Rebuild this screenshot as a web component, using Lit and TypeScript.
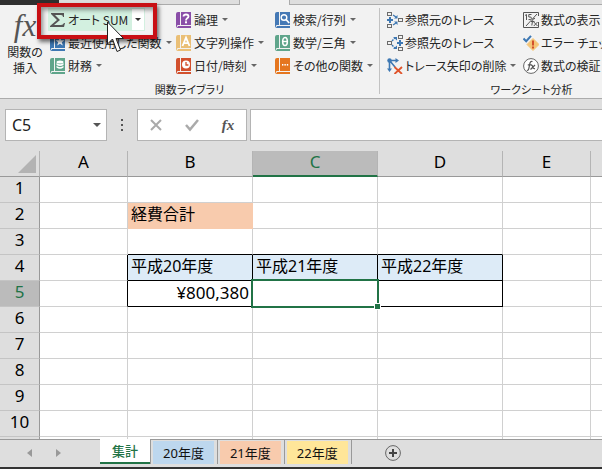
import { LitElement, html, svg, css, nothing, TemplateResult } from "lit";
import { customElement, property, state } from "lit/decorators.js";
import { classMap } from "lit/directives/class-map.js";

const book = (color: string, mark: TemplateResult) => svg`
  <path d="M2 0H4V13H2Q1 13 1 14Q1 15 2 15H15V16H2Q0 16 0 14V2Q0 0 2 0Z" fill=${color} />
  <rect x="5" y="0" width="10" height="13" fill=${color} />
  <rect x="2" y="14" width="13" height="1" fill=${color} />
  ${mark}`;

const icons: Record<string, TemplateResult> = {
  sum: svg`<path d="M1 1H14V5H13Q13 3 11 3H5L10 8L4 13H11Q13 13 14 11H15L14 15H0V14L7 8L1 2Z" fill="#555"/>`,
  recent: book("#3e78b3", svg`<path d="M10 2L11.2 5.2H14.4L11.8 7.3L12.8 10.6L10 8.7L7.2 10.6L8.2 7.3L5.6 5.2H8.8Z" fill="#fff"/>`),
  finance: book("#5fa58b", svg`<g fill="#fff"><ellipse cx="10" cy="4" rx="3.5" ry="1.6"/><path d="M6.5 5Q10 7.5 13.5 5V7Q10 9 6.5 7ZM6.5 8Q10 10.3 13.5 8V9.5Q10 12 6.5 9.5Z"/></g>`),
  logic: book("#8a4ea8", svg`<path d="M7.5 4.5Q7.5 2.5 10 2.5Q12.5 2.5 12.5 4.5Q12.5 5.6 11 6.4Q10 7 10 8.4" fill="none" stroke="#fff" stroke-width="1.8"/><rect x="9" y="9.3" width="2" height="2" fill="#fff"/>`),
  text: book("#eabf76", svg`<path d="M6.5 11L10 2.6L13.5 11M7.8 8.2H12.2" fill="none" stroke="#fff" stroke-width="1.8"/>`),
  date: book("#d2502d", svg`<circle cx="10" cy="6.5" r="4" fill="#fff"/><path d="M10 4V7H12.4" fill="none" stroke="#d2502d" stroke-width="1.3"/>`),
  lookup: book("#4579b5", svg`<circle cx="9" cy="5.5" r="2.8" fill="none" stroke="#fff" stroke-width="1.4"/><path d="M11 7.5L14.2 11" stroke="#fff" stroke-width="1.8"/>`),
  math: book("#5fa58b", svg`<ellipse cx="10" cy="6.5" rx="2.3" ry="4" fill="none" stroke="#fff" stroke-width="1.6"/><path d="M8 6.5H12" stroke="#fff" stroke-width="1.3"/>`),
  more: book("#e5761f", svg`<g fill="#fff"><rect x="7" y="6" width="1.4" height="1.6"/><rect x="9.4" y="6" width="1.4" height="1.6"/><rect x="11.8" y="6" width="1.4" height="1.6"/></g>`),
  precedents: svg`<g fill="none" stroke="#6b6b6b"><rect x=".5" y=".5" width="4" height="3"/><rect x=".5" y="12.5" width="4" height="3"/><rect x="11.5" y="6.5" width="4" height="3"/></g>
    <path d="M0 8H6M3 5V11" stroke="#3e78b3" stroke-width="2"/><path d="M6 3L9 5M6 13L9 11" stroke="#3e78b3" stroke-width="1.4"/><path d="M10.500 3V6.500H7ZM10.500 13V9.500H7Z" fill="#3e78b3"/>`,
  dependents: svg`<g fill="none" stroke="#6b6b6b"><rect x="11.5" y=".5" width="4" height="3"/><rect x="11.5" y="12.5" width="4" height="3"/><rect x=".5" y="6.500" width="4" height="3"/></g>
    <path d="M10 8H16M13 5V11" stroke="#3e78b3" stroke-width="2"/><path d="M5 6L8 3M5 10L8 13" stroke="#3e78b3" stroke-width="1.4" stroke-dasharray="2 1"/><path d="M6 2H10V5.500ZM6 14H10V10.500Z" fill="#3e78b3"/>`,
  erase: svg`<path d="M2.500 2V11M2 2.500H9M3 3L8 9" stroke="#3e78b3" stroke-width="1.600" fill="none"/><circle cx="2.500" cy="2.500" r="2.200" fill="#3e78b3"/>
    <path d="M8.500 0L12 2.500L8.500 5ZM0 10.500H5L2.500 14Z" fill="#3e78b3"/><path d="M7.500 9L15 16M15 9L7.500 16" stroke="#e0542b" stroke-width="1.800"/>`,
  show: svg`<path d="M15.500 10V15.500H.5V.5H15.500V4" fill="none" stroke="#555"/><path d="M2 3.500L3.500 2.500V8M8.500 2.500H5.800V5Q8.600 4.500 8.500 6.300Q8.300 8 5.500 7.600M3 14L14 2" fill="none" stroke="#555"/><path d="M12 6.500Q9.800 6 9.600 8.500L8.800 13.500M8 9.500H11.500M10.800 10L14.500 14M14.500 10L10.800 14" fill="none" stroke="#555"/>`,
  check: svg`<path d="M10 3.500L16 9.500L10 15.500L4 9.500Z" fill="#f5c577" stroke="#f5c577" stroke-linejoin="round"/><path d="M10 5.500V10.500M10 11.500V13.500" stroke="#d2502d" stroke-width="2"/><path d="M.5 3.500L3.200 6.200L8 .8" fill="none" stroke="#3e78b3" stroke-width="2"/>`,
  evaluate: svg`<circle cx="8" cy="8" r="7.400" fill="#fff" stroke="#666"/><path d="M9.500 3.500Q7.300 2.800 6.800 6L5.800 10.500Q5.400 12.800 3.800 12.300M4.800 6.800H8.500M8 7.500Q9 6.500 9.600 8.500Q10.200 11.300 12 10.500M12 7L7.500 11.500" fill="none" stroke="#555" stroke-width="1.200"/>`,
};

interface Command { icon: string; label: string; menu?: boolean }

const library: Command[][] = [
  [{ icon: "sum", label: "オート SUM", menu: true }, { icon: "recent", label: "最近使用した関数", menu: true }, { icon: "finance", label: "財務", menu: true }],
  [{ icon: "logic", label: "論理", menu: true }, { icon: "text", label: "文字列操作", menu: true }, { icon: "date", label: "日付/時刻", menu: true }],
  [{ icon: "lookup", label: "検索/行列", menu: true }, { icon: "math", label: "数学/三角", menu: true }, { icon: "more", label: "その他の関数", menu: true }],
];

const audit: Command[][] = [
  [{ icon: "precedents", label: "参照元のトレース" }, { icon: "dependents", label: "参照先のトレース" }, { icon: "erase", label: "トレース矢印の削除", menu: true }],
  [{ icon: "show", label: "数式の表示" }, { icon: "check", label: "エラー チェック", menu: true }, { icon: "evaluate", label: "数式の検証" }],
];

@customElement("ribbon-command")
class RibbonCommand extends LitElement {
  @property() icon = "";
  @property() label = "";
  @property({ type: Boolean }) menu = false;
  @property({ type: Boolean, reflect: true }) hot = false;

  static styles = css`
    :host { display: block; height: 23px; }
    button {
      display: flex; align-items: center; height: 23px; padding: 0 2px; border: 0; background: none;
      font: 12px/20px "Noto Sans CJK JP", sans-serif; font-feature-settings: "palt"; color: #262626; white-space: nowrap;
    }
    svg { width: 16px; height: 16px; margin-right: 2px; flex: none; }
    .drop { display: flex; align-items: center; margin-left: 4px; }
    .arrow { width: 0; height: 0; border: 3px solid transparent; border-top-color: #666; border-bottom: 0; }
    :host([hot]) button { background: #d3f0e0; padding-right: 0; }
    :host([hot]) .drop { justify-content: center; width: 12px; height: 21px; background: #fff; margin-right: 1px; }
    :host([hot]) .arrow { border-top-color: #333; }
  `;

  render() {
    return html`<button>
      <svg viewBox="0 0 16 16" aria-hidden="true">${icons[this.icon]}</svg>
      <span>${this.label}</span>
      ${this.menu ? html`<span class="drop"><span class="arrow"></span></span>` : nothing}
    </button>`;
  }
}

const columns = ["A", "B", "C", "D", "E", ""];
const rows = [1, 2, 3, 4, 5, 6, 7, 8, 9, 10];
const values: Record<string, string> = {
  B2: "経費合計", B4: "平成20年度", C4: "平成21年度", D4: "平成22年度", B5: "¥800,380",
};

@customElement("sheet-grid")
class SheetGrid extends LitElement {
  @property() active = "C5";

  static styles = css`
    :host { display: block; overflow: hidden; background: #fff; }
    table { width: 100%; table-layout: fixed; border-collapse: separate; border-spacing: 0; font: 16px/24px "Noto Sans", "Noto Sans CJK JP", sans-serif; color: #000; }
    .head { width: 40px; }
    .narrow { width: 88px; }
    .wide { width: 125px; }
    th, td { box-sizing: border-box; height: 26px; padding: 0; overflow: hidden; white-space: nowrap; font-weight: normal; border: 0 solid #d0d0d0; border-width: 0 1px 1px 0; }
    th { background: #dedede; text-align: center; font-size: 17px; line-height: 22px; vertical-align: top; }
    tr > :last-child { border-right: 0; }
    thead th { border-color: #999; border-right-color: #b4b4b4; }
    tbody th { border-color: #c4c4c4; border-right-color: #999; }
    .corner svg { display: block; width: 18px; height: 18px; margin: 4px 3px 0 auto; }
    .picked { background: #bbb; color: #217346; }
    thead .picked { border-bottom: 2px solid #217346; }
    td { padding: 0 3px; line-height: 22px; vertical-align: top; }
    .number { text-align: right; font-size: 17px; line-height: 24px; }
    .total { background: #f8cbad; border-color: #f8cbad; }
    .year { background: #ddebf7; }
    .line-right { border-right-color: #000; }
    .line-bottom { border-bottom-color: #000; }
    .active { position: relative; overflow: visible; }
    .cursor { position: absolute; inset: -2px; border: 2px solid #217346; }
    .cursor::after { content: ""; position: absolute; right: -4px; bottom: -4px; width: 5px; height: 5px; background: #217346; border: 1px solid #fff; }
    .rest th, .rest td { height: 2px; border-bottom: 0; line-height: 2px; }
  `;

  private cell(col: string, row: number) {
    const id = col + row;
    const inTable = "BCD".includes(col) && col !== "";
    return html`<td class=${classMap({
      total: id === "B2",
      year: inTable && row === 4,
      number: id === "B5",
      active: id === this.active,
      "line-right": (inTable || col === "A") && (row === 4 || row === 5),
      "line-bottom": inTable && row >= 3 && row <= 5,
    })}>${values[id] ?? nothing}${id === this.active ? html`<div class="cursor"></div>` : nothing}</td>`;
  }

  render() {
    return html`<table>
      <colgroup>
        <col class="head" /><col class="narrow" /><col class="wide" /><col class="wide" /><col class="wide" /><col class="narrow" /><col />
      </colgroup>
      <thead><tr>
        <th class="corner"><svg viewBox="0 0 18 18" aria-hidden="true"><path d="M18 0V18H0Z" fill="#b3b3b3" /></svg></th>
        ${columns.map((c) => html`<th scope="col" class=${classMap({ picked: c !== "" && this.active.startsWith(c) })}>${c}</th>`)}
      </tr></thead>
      <tbody>
        ${rows.map((r) => html`<tr>
          <th scope="row" class=${classMap({ picked: this.active.slice(1) === String(r) })}>${r}</th>
          ${columns.map((c) => this.cell(c, r))}
        </tr>`)}
        <tr class="rest"><th></th>${columns.map(() => html`<td></td>`)}</tr>
      </tbody>
    </table>`;
  }
}

@customElement("app-root")
class AppRoot extends LitElement {
  @state() private sheet = "集計";

  private sheets = [
    { name: "集計", tone: "plain" }, { name: "20年度", tone: "blue" },
    { name: "21年度", tone: "orange" }, { name: "22年度", tone: "yellow" },
  ];

  static styles = css`
    :host { display: block; overflow: hidden; background: #dedede; font: 12px/20px "Noto Sans CJK JP", sans-serif; color: #262626; }
    button { font: inherit; color: inherit; border: 0; padding: 0; background: none; }
    .top { display: flex; height: 5px; }
    .top span { box-sizing: border-box; border-bottom: 1px solid #ababab; }
    .file { width: 59px; background: #2f2f2f; }
    .top .file { border: 0; }
    .before { width: 181px; border-right: 1px solid #ababab; }
    .top .open { width: 49px; background: #f2f2f2; border: 0; }
    .after { flex: 1; border-left: 1px solid #ababab; }

    .ribbon { display: flex; background: #f2f2f2; border-bottom: 1px solid #ababab; padding: 3px 0 4px; overflow: hidden; }
    .group { flex: none; border-right: 1px solid #c2c2c2; }
    .commands { display: grid; grid-template-rows: 69px; }
    .library { grid-template-columns: 48px 126px 99px 106px; }
    .audit { grid-template-columns: 136px 162px; padding-left: 5px; }
    .caption { height: 17px; font-size: 11px; line-height: 24px; text-align: center; font-feature-settings: "palt"; }
    .insert { display: flex; flex-direction: column; align-items: center; line-height: 16px; font-feature-settings: "palt"; padding-left: 2px; }
    .insert .label { width: 36px; }
    .big { font: italic 31px/36px "Liberation Serif", serif; color: #555; }
    .stage { position: relative; }
    .highlight { position: absolute; left: 37px; top: -2px; width: 112px; height: 28px; border: 4px solid #c80f14; box-shadow: 2px 3px 4px rgba(0, 0, 0, 0.55), inset 2px 3px 4px rgba(0, 0, 0, 0.4); pointer-events: none; }
    .pointer { position: absolute; left: 106px; top: 16px; width: 20px; height: 32px; pointer-events: none; }

    .bar { display: flex; padding: 10px 0; height: 32px; }
    .box { box-sizing: border-box; display: flex; align-items: center; height: 32px; background: #fff; border: 1px solid #b4b4b4; }
    .name { width: 102px; margin-left: 5px; }
    input { box-sizing: border-box; width: 100%; min-width: 0; height: 28px; border: 0; padding: 0 6px; outline: 0; background: none; font: 16px/24px "Noto Sans", "Noto Sans CJK JP", sans-serif; color: #222; }
    .pick { flex: none; width: 18px; height: 28px; display: flex; align-items: center; justify-content: center; }
    .pick::after { content: ""; border: 4px solid transparent; border-top-color: #555; border-bottom: 0; }
    .dots { width: 2px; margin: 0 14px; display: flex; flex-direction: column; justify-content: center; gap: 3px; }
    .dots i { height: 2px; background: #555; }
    .edit { width: 110px; padding: 0 9px; justify-content: space-between; }
    .edit svg { display: block; width: 18px; height: 18px; }
    .fx { width: 18px; font: italic bold 15px/24px "Liberation Serif", serif; color: #555; }
    .formula { flex: 1; margin-left: 3px; border-right: 0; }

    .tabs { display: flex; height: 27px; border-top: 1px solid #999; border-bottom: 2px solid #333; font: 13px/24px "Noto Sans", "Noto Sans CJK JP", sans-serif; color: #111; }
    .moves { display: flex; align-items: center; justify-content: center; gap: 24px; width: 100px; height: 25px; box-sizing: border-box; padding-right: 13px; }
    .moves svg { display: block; width: 5px; height: 8px; }
    .tab { padding: 0 10px; margin: 1px 3px 2px 2px; height: 23px; line-height: 22px; white-space: nowrap; }
    .slot { border-right: 1px solid #999; height: 24px; display: flex; }
    .blue { background: #bdd7ee; }
    .orange { background: #f8cbad; }
    .yellow { background: #ffe699; }
    .slot.current { height: 25px; margin-top: -1px; }
    .slot.current .tab { margin: 0; padding: 0 12px; height: 25px; background: #fff; color: #217346; border-bottom: 2px solid #217346; font-weight: 500; }
    .add { display: flex; align-items: center; margin-left: 33px; height: 26px; }
    .add svg { display: block; width: 16px; height: 16px; }
  `;

  private column(list: Command[]) {
    return html`<div>${list.map((c) => html`<ribbon-command .icon=${c.icon} .label=${c.label} .menu=${c.menu ?? false} .hot=${c.icon === "sum"}></ribbon-command>`)}</div>`;
  }

  render() {
    return html`
      <div class="top"><span class="file"></span><span class="before"></span><span class="open"></span><span class="after"></span></div>
      <div class="stage">
        <div class="ribbon">
          <section class="group">
            <div class="commands library">
              <button class="insert"><span class="big">fx</span><span class="label">関数の挿入</span></button>
              ${library.map((l) => this.column(l))}
            </div>
            <div class="caption">関数ライブラリ</div>
          </section>
          <section class="group">
            <div class="commands audit">${audit.map((l) => this.column(l))}</div>
            <div class="caption">ワークシート分析</div>
          </section>
        </div>
        <div class="highlight"></div>
        <svg class="pointer" viewBox="0 0 20 32" aria-hidden="true">
          <path d="M1.500 1V23L6.500 18L11 30.500L14.500 29L10 17.500H17.500Z" fill="#fff" stroke="#222" />
        </svg>
      </div>

      <div class="bar">
        <div class="box name"><input aria-label="名前ボックス" .value=${"C5"} /><button class="pick" aria-label="名前の一覧"></button></div>
        <div class="dots"><i></i><i></i><i></i></div>
        <div class="box edit">
          <button aria-label="キャンセル"><svg viewBox="0 0 18 18"><path d="M4 4L14 14M14 4L4 14" stroke="#aaa" stroke-width="2" /></svg></button>
          <button aria-label="入力"><svg viewBox="0 0 18 18"><path d="M3 9L7 13.500L15 4" fill="none" stroke="#aaa" stroke-width="2.500" /></svg></button>
          <button class="fx" aria-label="関数の挿入">fx</button>
        </div>
        <div class="box formula"><input aria-label="数式バー" /></div>
      </div>

      <sheet-grid active="C5"></sheet-grid>

      <nav class="tabs">
        <div class="moves">
          <button aria-label="前のシート"><svg viewBox="0 0 5 8"><path d="M5 0V8L0 4Z" fill="#999" /></svg></button>
          <button aria-label="次のシート"><svg viewBox="0 0 5 8"><path d="M0 0V8L5 4Z" fill="#999" /></svg></button>
        </div>
        ${this.sheets.map((s) => html`<div class="slot ${classMap({ current: s.name === this.sheet })}">
          <button class="tab ${s.tone}" @click=${() => (this.sheet = s.name)}>${s.name}</button></div>`)}
        <button class="add" aria-label="新しいシート">
          <svg viewBox="0 0 16 16"><circle cx="8" cy="8" r="7.400" fill="none" stroke="#666" /><path d="M4 8H12M8 4V12" stroke="#444" stroke-width="2" /></svg>
        </button>
      </nav>
    `;
  }
}
